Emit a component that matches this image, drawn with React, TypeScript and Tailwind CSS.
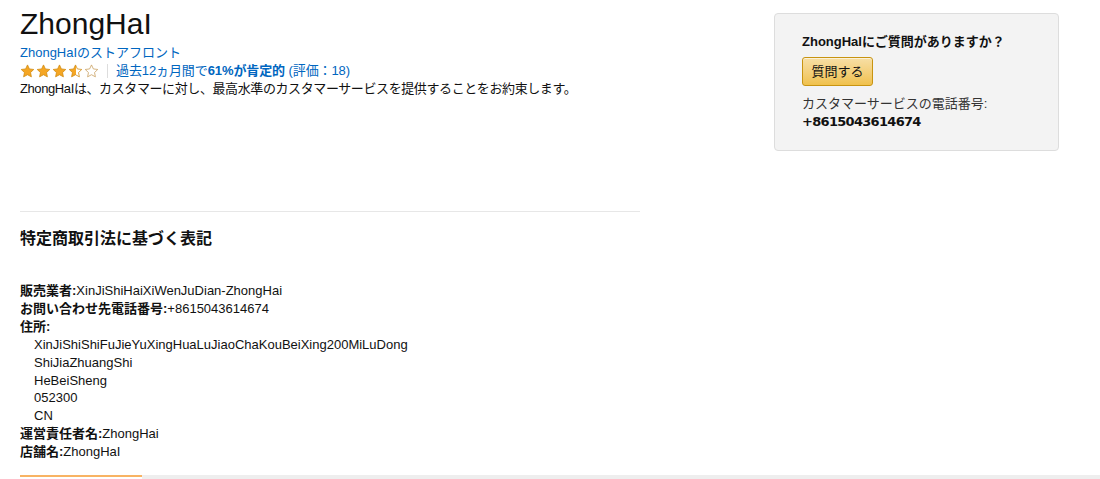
const FONT = '"Liberation Sans", Arial, "Noto Sans CJK JP", sans-serif';

const Star = ({ fill }: { fill: "full" | "half" | "empty" }) => (
    <svg width="15" height="14" viewBox="0 0 24 23" className="shrink-0">
        <defs>
            <linearGradient id="halfStar" x1="0" x2="1" y1="0" y2="0">
                <stop offset="50%" stopColor="#f5a623" />
                <stop offset="50%" stopColor="#ffffff" />
            </linearGradient>
        </defs>
        <path
            d="M12 1.5l3.1 6.6 7.2.9-5.3 5 1.4 7.1L12 17.6l-6.4 3.5 1.4-7.1-5.3-5 7.2-.9z"
            fill={fill === "full" ? "#f5a623" : fill === "half" ? "url(#halfStar)" : "#ffffff"}
            stroke={fill === "empty" ? "#c8a060" : "#d08a10"}
            strokeWidth="1.3"
            strokeLinejoin="round"
        />
    </svg>
);

const App = () => {
    return (
        <div className="w-[1100px] h-[479px] bg-white text-[#111] overflow-hidden flex flex-col" style={{ fontFamily: FONT }}>
            <div className="flex flex-1 pl-5">
                <div className="w-[620px] flex flex-col">
                    <h1 className="text-[30px] leading-[34px] mt-[7px] text-[#111]">ZhongHaI</h1>
                    <a className="text-[13px] leading-[18px] mt-[3px] text-[#0066c0]">ZhongHaIのストアフロント</a>
                    <div className="flex items-center text-[13px] leading-[18px] h-[18px]">
                        <div className="flex gap-[1px]">
                            <Star fill="full" />
                            <Star fill="full" />
                            <Star fill="full" />
                            <Star fill="half" />
                            <Star fill="empty" />
                        </div>
                        <span className="mx-[8px] w-px h-[14px] bg-[#ddd]" />
                        <span className="text-[#0066c0] tracking-[-0.1px]">
                            過去12ヵ月間で<b>61%が肯定的</b> (評価：18)
                        </span>
                    </div>
                    <p className="text-[13px] leading-[18px] tracking-[-0.4px]">
                        ZhongHaIは、カスタマーに対し、最高水準のカスタマーサービスを提供することをお約束します。
                    </p>
                    <div className="mt-[113px] border-t border-[#e7e7e7]" />
                    <h2 className="text-[16px] font-bold leading-[22px] mt-[16px]">特定商取引法に基づく表記</h2>
                    <div className="mt-[32px] text-[13px] leading-[17.9px]">
                        <div><b>販売業者:</b>XinJiShiHaiXiWenJuDian-ZhongHai</div>
                        <div><b>お問い合わせ先電話番号:</b>+8615043614674</div>
                        <div><b>住所:</b></div>
                        <div className="pl-[14px]">
                            <div>XinJiShiShiFuJieYuXingHuaLuJiaoChaKouBeiXing200MiLuDong</div>
                            <div>ShiJiaZhuangShi</div>
                            <div>HeBeiSheng</div>
                            <div>052300</div>
                            <div>CN</div>
                        </div>
                        <div><b>運営責任者名:</b>ZhongHai</div>
                        <div><b>店舗名:</b>ZhongHaI</div>
                    </div>
                </div>
                <div className="ml-[134px] mt-[13px]">
                    <div className="w-[285px] h-[138px] bg-[#f3f3f3] border border-[#dddddd] rounded-[4px] pl-[27px] pt-[19px]">
                        <div className="text-[13px] font-bold leading-[18px]">ZhongHaIにご質問がありますか？</div>
                        <button className="mt-[6px] h-[29px] w-[71px] rounded-[3px] border border-[#c89411] bg-gradient-to-b from-[#f7dfa5] to-[#f0c14b] text-[13px] text-[#111] shadow-[inset_0_1px_0_rgba(255,255,255,0.6)]">
                            質問する
                        </button>
                        <div className="mt-[9px] text-[13px] leading-[18px] text-[#333]">カスタマーサービスの電話番号:</div>
                        <div className="text-[13px] leading-[18px] font-bold tracking-[-0.7px] font-['DejaVu_Sans',sans-serif]">+8615043614674</div>
                    </div>
                </div>
            </div>
            <div className="ml-5 h-[4px] bg-[#eeeeee] flex">
                <div className="w-[122px] border-t-2 border-[#f8b363] bg-white" />
            </div>
        </div>
    );
};
export default App;
